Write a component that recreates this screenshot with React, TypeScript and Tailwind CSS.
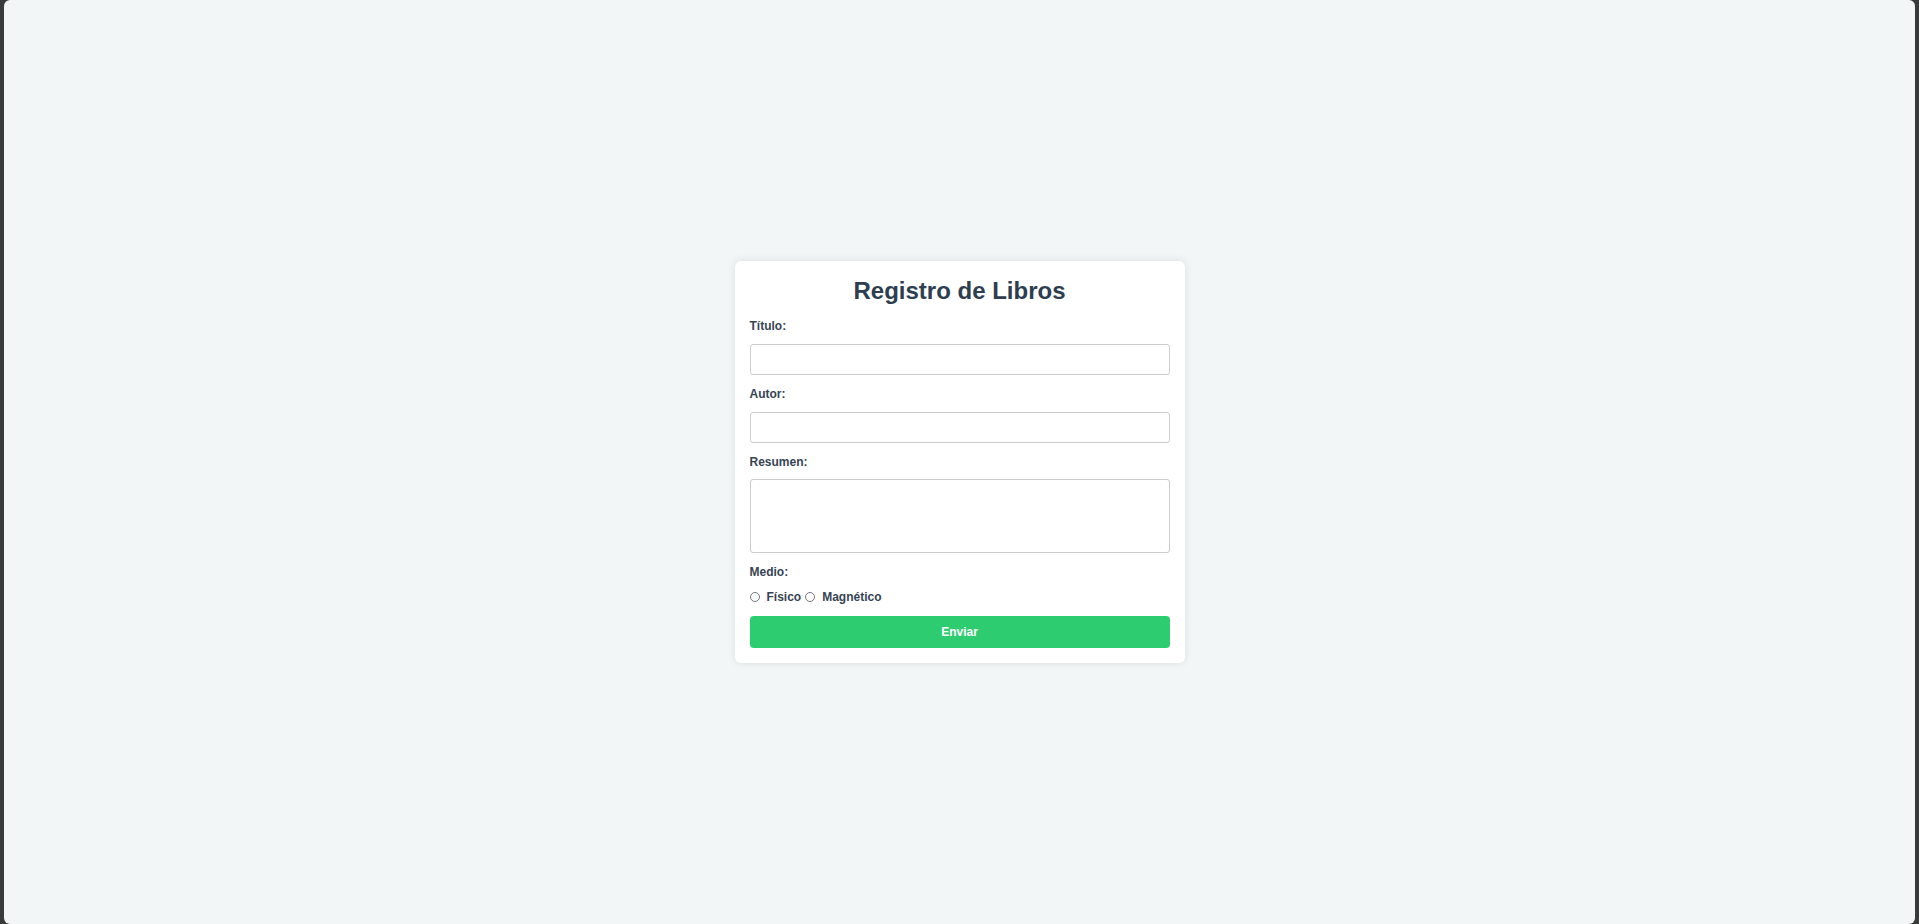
import React from "react";

export default function App() {
  return (
    <div className="w-[1919px] h-[924px] bg-[#3a3a3a] flex pl-[4px] pr-[4px]" style={{ fontFamily: '"Liberation Sans", Arial, sans-serif' }}>
      <div className="flex-1 bg-[#f3f6f7] rounded-[6px] flex items-center justify-center">
        <div className="w-[450px] bg-white rounded-[6px] shadow-[0_0_8px_rgba(0,0,0,0.1)] px-[15px] pt-[16px] pb-[15px] flex flex-col">
          <h2 className="text-[24px] font-bold text-[#2c3e50] text-center leading-[27.6px]">Registro de Libros</h2>
          <label className="mt-[14px] text-[12px] font-bold text-[#374454] leading-[14px]">Título:</label>
          <input type="text" className="mt-[11px] h-[31px] border border-[#ccc] rounded-[3px] bg-white" />
          <label className="mt-[12px] text-[12px] font-bold text-[#374454] leading-[14px]">Autor:</label>
          <input type="text" className="mt-[11px] h-[31px] border border-[#ccc] rounded-[3px] bg-white" />
          <label className="mt-[12px] text-[12px] font-bold text-[#374454] leading-[14px]">Resumen:</label>
          <textarea className="mt-[10px] h-[74px] border border-[#ccc] rounded-[3px] bg-white resize-none" />
          <label className="mt-[12px] text-[12px] font-bold text-[#374454] leading-[14px]">Medio:</label>
          <div className="mt-[10px] flex items-center h-[16px] text-[12px] font-bold text-[#374454]">
            <span className="w-[10px] h-[10px] rounded-full border border-[#767676] bg-white"></span>
            <span className="ml-[7px]">Físico</span>
            <span className="ml-[4px] w-[10px] h-[10px] rounded-full border border-[#767676] bg-white"></span>
            <span className="ml-[7px]">Magnético</span>
          </div>
          <button className="mt-[11px] h-[32px] bg-[#2ecc71] text-white text-[12px] font-bold rounded-[4px]">Enviar</button>
        </div>
      </div>
    </div>
  );
}
